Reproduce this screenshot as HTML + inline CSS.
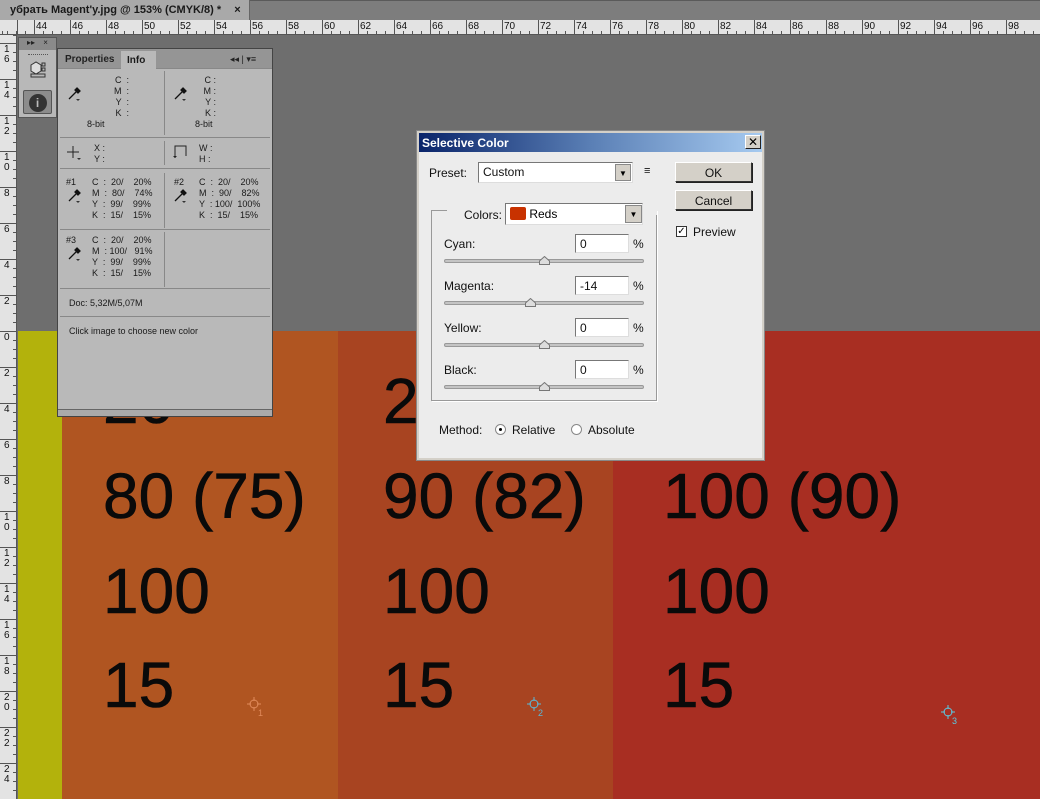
<!DOCTYPE html>
<html><head><meta charset="utf-8"><style>
*{margin:0;padding:0;box-sizing:border-box}
body{width:1040px;height:799px;overflow:hidden;position:relative;background:#6e6e6e;font-family:"Liberation Sans",sans-serif}
.a{position:absolute}
.tabbar{left:0;top:0;width:1040px;height:20px;background:#7d7d7d;border-top:1px solid #5a5a5a}
.tab{left:0;top:0;width:250px;height:20px;background:#a9a9a9;font-size:11px;font-weight:bold;color:#1a1a1a;padding:4px 0 0 10px;border-right:1px solid #666}
.hr{left:0;top:20px;width:1040px;height:15px;background:#e3e3e3;border-bottom:1px solid #555;
 background-image:repeating-linear-gradient(90deg,#555 0 1px,transparent 1px 9px);background-size:100% 3px;background-repeat:repeat-x;background-position:7px 11px}
.hr span{position:absolute;top:1px;font-size:10px;color:#111}
.hr i{position:absolute;top:0;width:1px;height:15px;background:#555}
.vr{left:0;top:35px;width:17px;height:764px;background:#e3e3e3;border-right:1px solid #555;
 background-image:repeating-linear-gradient(180deg,#555 0 1px,transparent 1px 9px);background-size:4px 100%;background-repeat:repeat-y;background-position:13px 8px}
.vr span{position:absolute;left:4px;font-size:10px;line-height:10px;color:#111;width:7px}
.vr i{position:absolute;left:0;height:1px;width:17px;background:#555}
.big{position:absolute;font-size:64px;color:#0a0a0a;line-height:1;-webkit-text-stroke:0.6px #0a0a0a}
.panel{font-size:9px;color:#1a1a1a;font-family:"Liberation Sans",sans-serif}
.dlg{font-family:"Liberation Sans",sans-serif;font-size:12px;color:#111}
.inp{position:absolute;background:#fff;border:1px solid #777;border-right-color:#ddd;border-bottom-color:#ddd;font-size:12px;padding:2px 0 0 4px;height:19px}
.sl{position:absolute;left:444px;width:200px;height:4px;background:#c4c4c4;border:1px solid #999;border-radius:2px}
.th{position:absolute;width:11px;height:9px}
.btn{position:absolute;left:675px;width:77px;height:20px;background:#d4d0c8;border:1px solid #333;border-top-color:#fff;border-left-color:#fff;box-shadow:1px 1px 0 #222;text-align:center;font-size:12px;padding-top:3px}
.dp{position:absolute;width:14px;height:14px}
</style></head><body>
<div class="a tabbar"></div>
<div class="a tab">убрать Magent'y.jpg @ 153% (CMYK/8) * <span style="margin-left:10px">×</span></div>
<div class="a hr">
<i style="left:17px"></i>
<i style="left:34px"></i><span style="left:36px">44</span>
<i style="left:70px"></i><span style="left:72px">46</span>
<i style="left:106px"></i><span style="left:108px">48</span>
<i style="left:142px"></i><span style="left:144px">50</span>
<i style="left:178px"></i><span style="left:180px">52</span>
<i style="left:214px"></i><span style="left:216px">54</span>
<i style="left:250px"></i><span style="left:252px">56</span>
<i style="left:286px"></i><span style="left:288px">58</span>
<i style="left:322px"></i><span style="left:324px">60</span>
<i style="left:358px"></i><span style="left:360px">62</span>
<i style="left:394px"></i><span style="left:396px">64</span>
<i style="left:430px"></i><span style="left:432px">66</span>
<i style="left:466px"></i><span style="left:468px">68</span>
<i style="left:502px"></i><span style="left:504px">70</span>
<i style="left:538px"></i><span style="left:540px">72</span>
<i style="left:574px"></i><span style="left:576px">74</span>
<i style="left:610px"></i><span style="left:612px">76</span>
<i style="left:646px"></i><span style="left:648px">78</span>
<i style="left:682px"></i><span style="left:684px">80</span>
<i style="left:718px"></i><span style="left:720px">82</span>
<i style="left:754px"></i><span style="left:756px">84</span>
<i style="left:790px"></i><span style="left:792px">86</span>
<i style="left:826px"></i><span style="left:828px">88</span>
<i style="left:862px"></i><span style="left:864px">90</span>
<i style="left:898px"></i><span style="left:900px">92</span>
<i style="left:934px"></i><span style="left:936px">94</span>
<i style="left:970px"></i><span style="left:972px">96</span>
<i style="left:1006px"></i><span style="left:1008px">98</span>
</div>
<div class="a vr">
<i style="top:8px"></i><span style="top:10px">1 6</span>
<i style="top:44px"></i><span style="top:46px">1 4</span>
<i style="top:80px"></i><span style="top:82px">1 2</span>
<i style="top:116px"></i><span style="top:118px">1 0</span>
<i style="top:152px"></i><span style="top:154px">8</span>
<i style="top:188px"></i><span style="top:190px">6</span>
<i style="top:224px"></i><span style="top:226px">4</span>
<i style="top:260px"></i><span style="top:262px">2</span>
<i style="top:296px"></i><span style="top:298px">0</span>
<i style="top:332px"></i><span style="top:334px">2</span>
<i style="top:368px"></i><span style="top:370px">4</span>
<i style="top:404px"></i><span style="top:406px">6</span>
<i style="top:440px"></i><span style="top:442px">8</span>
<i style="top:476px"></i><span style="top:478px">1 0</span>
<i style="top:512px"></i><span style="top:514px">1 2</span>
<i style="top:548px"></i><span style="top:550px">1 4</span>
<i style="top:584px"></i><span style="top:586px">1 6</span>
<i style="top:620px"></i><span style="top:622px">1 8</span>
<i style="top:656px"></i><span style="top:658px">2 0</span>
<i style="top:692px"></i><span style="top:694px">2 2</span>
<i style="top:728px"></i><span style="top:730px">2 4</span>
</div>
<!-- image -->
<div class="a" style="left:18px;top:331px;width:44px;height:468px;background:#b3b20c"></div>
<div class="a" style="left:62px;top:331px;width:276px;height:468px;background:#b05521"></div>
<div class="a" style="left:338px;top:331px;width:275px;height:468px;background:#a84421"></div>
<div class="a" style="left:613px;top:331px;width:427px;height:468px;background:#a82e22"></div>
<div class="big" style="left:103px;top:369px">20</div>
<div class="big" style="left:383px;top:369px">20</div>
<div class="big" style="left:103px;top:464px">80 (75)</div>
<div class="big" style="left:383px;top:464px">90 (82)</div>
<div class="big" style="left:663px;top:464px">100 (90)</div>
<div class="big" style="left:103px;top:559px">100</div>
<div class="big" style="left:383px;top:559px">100</div>
<div class="big" style="left:663px;top:559px">100</div>
<div class="big" style="left:103px;top:653px">15</div>
<div class="big" style="left:383px;top:653px">15</div>
<div class="big" style="left:663px;top:653px">15</div>
<!-- markers -->
<svg class="a" style="left:244px;top:694px" width="24" height="24"><g stroke="#e08a5a" fill="none"><circle cx="10" cy="10" r="4"/><path d="M10 3v4M10 13v4M3 10h4M13 10h4"/></g><text x="14" y="22" font-size="9" fill="#e08a5a">1</text></svg>
<svg class="a" style="left:524px;top:694px" width="24" height="24"><g stroke="#5ab8d8" fill="none"><circle cx="10" cy="10" r="4"/><path d="M10 3v4M10 13v4M3 10h4M13 10h4"/></g><text x="14" y="22" font-size="9" fill="#5ab8d8">2</text></svg>
<svg class="a" style="left:938px;top:702px" width="24" height="24"><g stroke="#5ac8e0" fill="none"><circle cx="10" cy="10" r="4"/><path d="M10 3v4M10 13v4M3 10h4M13 10h4"/></g><text x="14" y="22" font-size="9" fill="#5ac8e0">3</text></svg>
<!-- tool strip -->
<div class="a" style="left:18px;top:37px;width:39px;height:81px;background:#b8b8b8;border:1px solid #555">
 <div style="height:12px;background:#8a8a8a;font-size:8px;color:#222;padding-left:8px">▸▸ <span style="margin-left:6px">×</span></div>
 <div style="margin:4px auto 0;width:20px;height:2px;border-top:1px dotted #555"></div>
 <svg style="position:absolute;left:10px;top:22px" width="18" height="18"><path d="M2 5l5-3 5 3v6l-5 3-5-3z" fill="#ddd" stroke="#333"/><rect x="13" y="3" width="3" height="3" fill="none" stroke="#333"/><rect x="13" y="8" width="3" height="3" fill="none" stroke="#333"/><rect x="2" y="14" width="14" height="3" fill="none" stroke="#333"/></svg>
 <div style="position:absolute;left:4px;top:52px;width:29px;height:24px;background:#8c8c8c;border:1px solid #555;border-radius:2px"><div style="margin:3px auto;width:18px;height:18px;border-radius:50%;background:#333;color:#bbb;font-weight:bold;font-size:12px;text-align:center;line-height:18px">i</div></div>
</div>
<!-- info panel -->
<div class="a panel" style="left:57px;top:48px;width:216px;height:369px;background:#b9b9b9;border:1px solid #444">
 <div style="position:absolute;left:0;top:0;width:214px;height:20px;background:#959595;border-bottom:1px solid #888"></div>
 <div style="position:absolute;left:7px;top:5px;font-size:10px;font-weight:bold;color:#222">Properties</div>
 <div style="position:absolute;left:63px;top:2px;width:35px;height:19px;background:#b9b9b9;font-size:10px;font-weight:bold;padding:4px 0 0 6px">Info</div>
 <div style="position:absolute;left:172px;top:5px;font-size:9px;color:#222">◂◂ | ▾≡</div>
 <div style="position:absolute;left:106px;top:22px;width:1px;height:64px;background:#888"></div>
 <div style="position:absolute;left:106px;top:92px;width:1px;height:24px;background:#888"></div>
 <div style="position:absolute;left:106px;top:124px;width:1px;height:55px;background:#888"></div>
 <div style="position:absolute;left:106px;top:183px;width:1px;height:55px;background:#888"></div>
 <div style="position:absolute;left:2px;top:88px;width:210px;height:1px;background:#888"></div>
 <div style="position:absolute;left:2px;top:119px;width:210px;height:1px;background:#888"></div>
 <div style="position:absolute;left:2px;top:180px;width:210px;height:1px;background:#888"></div>
 <div style="position:absolute;left:2px;top:239px;width:210px;height:1px;background:#888"></div>
 <div style="position:absolute;left:2px;top:267px;width:210px;height:1px;background:#888"></div>
 <div style="position:absolute;left:0;top:360px;width:214px;height:7px;background:#aaa;border-top:1px solid #666"></div>
 <div style="position:absolute;left:33px;top:26px;line-height:11px;text-align:right;width:38px">C &nbsp;:<br>M &nbsp;:<br>Y &nbsp;:<br>K &nbsp;:</div>
 <div style="position:absolute;left:29px;top:70px">8-bit</div>
 <div style="position:absolute;left:134px;top:26px;line-height:11px;text-align:right;width:24px">C :<br>M :<br>Y :<br>K :</div>
 <div style="position:absolute;left:137px;top:70px">8-bit</div>
 <svg class="dp" style="left:9px;top:38px" viewBox="0 0 14 14"><path d="M2 12l7-7M8 3l3 3M10 1l3 3-2 2-3-3z" stroke="#111" fill="#111" stroke-width="1.3"/><path d="M9 12h4l-2 2z" fill="#333"/></svg>
 <svg class="dp" style="left:115px;top:38px" viewBox="0 0 14 14"><path d="M2 12l7-7M8 3l3 3M10 1l3 3-2 2-3-3z" stroke="#111" fill="#111" stroke-width="1.3"/><path d="M9 12h4l-2 2z" fill="#333"/></svg>
 <svg style="position:absolute;left:8px;top:96px" width="16" height="16"><path d="M7 1v12M1 7h12" stroke="#222"/><path d="M11 13h4l-2 2z" fill="#333"/></svg>
 <div style="position:absolute;left:36px;top:94px;line-height:11px">X :<br>Y :</div>
 <svg style="position:absolute;left:114px;top:95px" width="16" height="16"><path d="M3 14V2h11v10" stroke="#222" fill="none"/><path d="M1 12h4l-2 2z" fill="#222"/></svg>
 <div style="position:absolute;left:141px;top:94px;line-height:11px">W :<br>H :</div>
 <div style="position:absolute;left:8px;top:128px;line-height:11px">#1</div>
 <svg class="dp" style="left:9px;top:140px" viewBox="0 0 14 14"><path d="M2 12l7-7M8 3l3 3M10 1l3 3-2 2-3-3z" stroke="#111" fill="#111" stroke-width="1.3"/><path d="M9 12h4l-2 2z" fill="#333"/></svg>
 <div style="position:absolute;left:34px;top:128px;line-height:11px;white-space:pre">C  :  20/    20%
M  :  80/    74%
Y  :  99/    99%
K  :  15/    15%</div>
 <div style="position:absolute;left:116px;top:128px;line-height:11px">#2</div>
 <svg class="dp" style="left:115px;top:140px" viewBox="0 0 14 14"><path d="M2 12l7-7M8 3l3 3M10 1l3 3-2 2-3-3z" stroke="#111" fill="#111" stroke-width="1.3"/><path d="M9 12h4l-2 2z" fill="#333"/></svg>
 <div style="position:absolute;left:141px;top:128px;line-height:11px;white-space:pre">C  :  20/    20%
M  :  90/    82%
Y  : 100/  100%
K  :  15/    15%</div>
 <div style="position:absolute;left:8px;top:186px;line-height:11px">#3</div>
 <svg class="dp" style="left:9px;top:198px" viewBox="0 0 14 14"><path d="M2 12l7-7M8 3l3 3M10 1l3 3-2 2-3-3z" stroke="#111" fill="#111" stroke-width="1.3"/><path d="M9 12h4l-2 2z" fill="#333"/></svg>
 <div style="position:absolute;left:34px;top:186px;line-height:11px;white-space:pre">C  :  20/    20%
M  : 100/   91%
Y  :  99/    99%
K  :  15/    15%</div>
 <div style="position:absolute;left:11px;top:249px">Doc: 5,32M/5,07M</div>
 <div style="position:absolute;left:11px;top:277px">Click image to choose new color</div>
</div>
<!-- dialog -->
<div class="a dlg" style="left:416px;top:130px;width:349px;height:331px;background:#ececec;border:1px solid #888;box-shadow:inset 0 0 0 2px #d4d0c8">
 <div style="position:absolute;left:2px;top:2px;width:343px;height:19px;background:linear-gradient(90deg,#0a246a 0%,#5a7fb5 50%,#a6caf0 100%);color:#fff;font-weight:bold;font-size:12px;padding:3px 0 0 3px">Selective Color</div>
 <div style="position:absolute;left:328px;top:4px;width:16px;height:14px;background:#d4d0c8;border:1px solid #222;border-top-color:#fff;border-left-color:#fff;font-size:12px;line-height:12px;text-align:center;color:#000">✕</div>
</div>
<div class="a dlg" style="left:429px;top:166px">Preset:</div>
<div class="inp dlg" style="left:478px;top:162px;width:155px;height:21px">Custom</div>
<div class="a" style="left:615px;top:164px;width:16px;height:17px;background:#d4d0c8;border:1px solid #888;font-size:8px;text-align:center;line-height:17px">▼</div>
<div class="a dlg" style="left:644px;top:165px;font-size:11px">≡</div>
<div class="btn dlg" style="top:162px">OK</div>
<div class="btn dlg" style="top:190px">Cancel</div>
<div class="a" style="left:676px;top:226px;width:11px;height:11px;background:#fff;border:1px solid #333;font-size:10px;line-height:9px;text-align:center">✓</div>
<div class="a dlg" style="left:693px;top:225px">Preview</div>
<div class="a" style="left:431px;top:210px;width:226px;height:191px;border:1px solid #999;box-shadow:1px 1px 0 #fff"></div>
<div class="a" style="left:447px;top:205px;width:210px;height:10px;background:#ececec"></div>
<div class="a dlg" style="left:464px;top:208px">Colors:</div>
<div class="inp" style="left:505px;top:203px;width:138px;height:22px;padding-top:3px;font-family:'Liberation Sans',sans-serif"><span style="display:inline-block;width:16px;height:13px;background:#c83200;vertical-align:-2px;border-radius:2px"></span> Reds</div>
<div class="a" style="left:625px;top:205px;width:17px;height:18px;background:#d4d0c8;border:1px solid #888;font-size:8px;text-align:center;line-height:18px">▼</div>

<div class="a dlg" style="left:444px;top:237px">Cyan:</div>
<div class="inp dlg" style="left:575px;top:234px;width:54px">0</div>
<div class="a dlg" style="left:633px;top:237px">%</div>
<div class="sl" style="top:259px"></div>
<svg class="th" style="left:539px;top:256px" viewBox="0 0 11 9"><path d="M5.5 0.5L10.5 5V8.5H0.5V5Z" fill="#ddd" stroke="#777"/></svg>

<div class="a dlg" style="left:444px;top:279px">Magenta:</div>
<div class="inp dlg" style="left:575px;top:276px;width:54px">-14</div>
<div class="a dlg" style="left:633px;top:279px">%</div>
<div class="sl" style="top:301px"></div>
<svg class="th" style="left:525px;top:298px" viewBox="0 0 11 9"><path d="M5.5 0.5L10.5 5V8.5H0.5V5Z" fill="#ddd" stroke="#777"/></svg>

<div class="a dlg" style="left:444px;top:321px">Yellow:</div>
<div class="inp dlg" style="left:575px;top:318px;width:54px">0</div>
<div class="a dlg" style="left:633px;top:321px">%</div>
<div class="sl" style="top:343px"></div>
<svg class="th" style="left:539px;top:340px" viewBox="0 0 11 9"><path d="M5.5 0.5L10.5 5V8.5H0.5V5Z" fill="#ddd" stroke="#777"/></svg>

<div class="a dlg" style="left:444px;top:363px">Black:</div>
<div class="inp dlg" style="left:575px;top:360px;width:54px">0</div>
<div class="a dlg" style="left:633px;top:363px">%</div>
<div class="sl" style="top:385px"></div>
<svg class="th" style="left:539px;top:382px" viewBox="0 0 11 9"><path d="M5.5 0.5L10.5 5V8.5H0.5V5Z" fill="#ddd" stroke="#777"/></svg>

<div class="a dlg" style="left:439px;top:423px">Method:</div>
<div class="a" style="left:495px;top:424px;width:11px;height:11px;border-radius:50%;background:#fff;border:1px solid #888"><div style="margin:3px;width:3px;height:3px;border-radius:50%;background:#000"></div></div>
<div class="a dlg" style="left:512px;top:423px">Relative</div>
<div class="a" style="left:571px;top:424px;width:11px;height:11px;border-radius:50%;background:#fff;border:1px solid #888"></div>
<div class="a dlg" style="left:588px;top:423px">Absolute</div>
</body></html>
